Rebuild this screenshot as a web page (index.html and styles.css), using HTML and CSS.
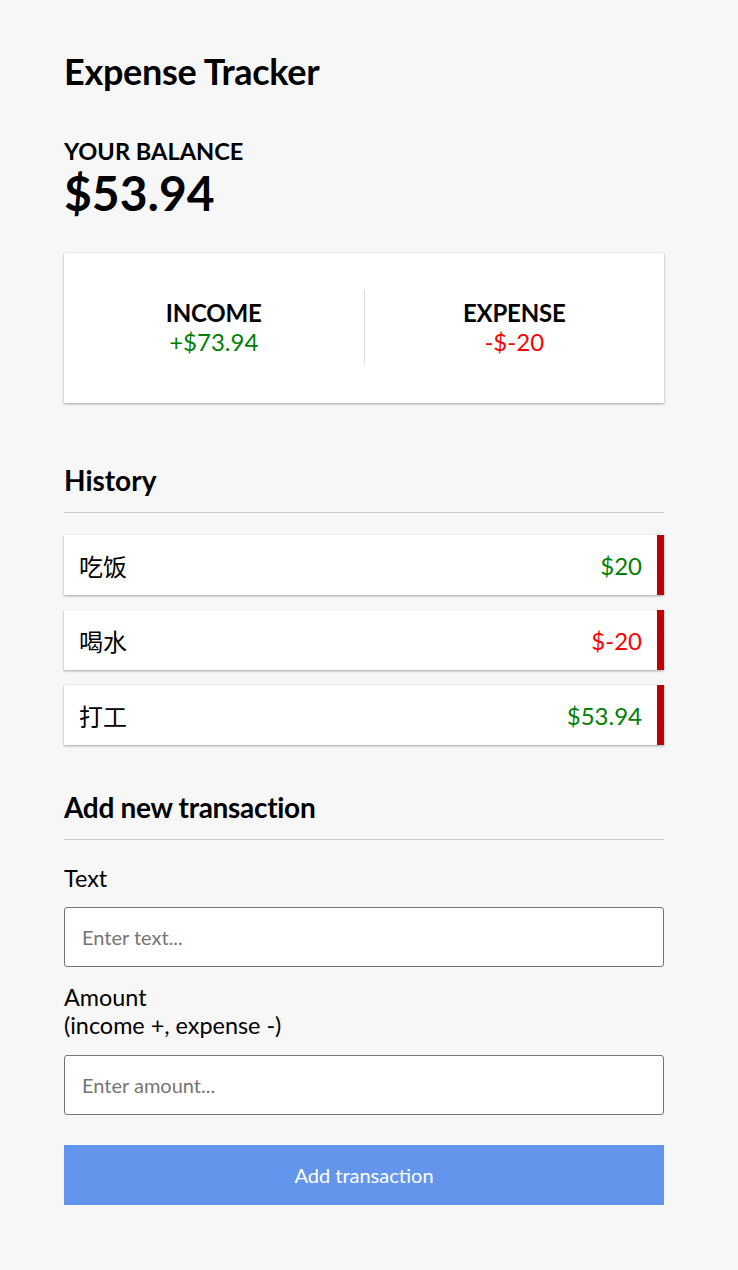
FILE: index.html
```html
<!DOCTYPE html>
<html lang="en">
<head>
<meta charset="UTF-8">
<title>Expense Tracker</title>
<link rel="stylesheet" href="styles.css">
</head>
<body>
<div class="container">
  <h1 class="title">Expense Tracker</h1>

  <h4 class="balance-label">Your Balance</h4>
  <p class="balance">$53.94</p>

  <div class="inc-exp">
    <div class="inc-exp-col first">
      <h4 class="inc-exp-label">Income</h4>
      <p class="money plus">+$73.94</p>
    </div>
    <div class="inc-exp-col">
      <h4 class="inc-exp-label">Expense</h4>
      <p class="money minus">-$-20</p>
    </div>
  </div>

  <h3 class="section-title history-title">History</h3>
  <ul class="list">
    <li class="item"><span class="item-text">吃饭</span><span class="item-amount plus">$20</span></li>
    <li class="item"><span class="item-text">喝水</span><span class="item-amount minus">$-20</span></li>
    <li class="item"><span class="item-text">打工</span><span class="item-amount plus">$53.94</span></li>
  </ul>

  <h3 class="section-title add-title">Add new transaction</h3>
  <form class="form">
    <label class="label" for="text">Text</label>
    <input class="field" type="text" id="text" placeholder="Enter text...">
    <label class="label" for="amount">Amount <br>(income +, expense -)</label>
    <input class="field" type="number" id="amount" placeholder="Enter amount...">
    <button class="btn" type="button">Add transaction</button>
  </form>
</div>
</body>
</html>
```

FILE: styles.css
```css
* {
  box-sizing: border-box;
}

body {
  margin: 0;
  background-color: #f7f7f7;
  font-family: Lato, "Noto Sans CJK SC", sans-serif;
  color: #000;
}

.container {
  width: 600px;
  margin: 0 0 0 64px;
  padding: 52px 0 65px;
}

.title {
  margin: 0;
  font-size: 36px;
  line-height: 38px;
  font-weight: 700;
  letter-spacing: -0.3px;
}

.balance-label {
  margin: 47px 0 0;
  font-size: 23.6px;
  line-height: 28px;
  font-weight: 700;
  text-transform: uppercase;
}

.balance {
  margin: 0;
  font-size: 48px;
  line-height: 56px;
  font-weight: 700;
}

.inc-exp {
  display: flex;
  margin-top: 32px;
  padding: 37px 0 38px;
  background-color: #fff;
  box-shadow: 0 1px 3px rgba(0, 0, 0, 0.12), 0 1px 2px rgba(0, 0, 0, 0.24);
}

.inc-exp-col {
  flex: 1;
  text-align: center;
  padding: 8px 0 8px;
}

.inc-exp-col.first {
  border-right: 1px solid #dedede;
}

.inc-exp-label {
  margin: 0;
  font-size: 24px;
  line-height: 29px;
  font-weight: 700;
  text-transform: uppercase;
  letter-spacing: -0.2px;
}

.money {
  margin: 0;
  font-size: 24px;
  line-height: 30px;
}

.money.plus,
.item-amount.plus {
  color: #008000;
}

.money.minus,
.item-amount.minus {
  color: #ff0000;
}

.section-title {
  margin: 0;
  font-size: 28px;
  line-height: 34px;
  font-weight: 700;
  letter-spacing: -0.3px;
  padding-bottom: 15px;
  border-bottom: 1px solid #cccccc;
}

.history-title {
  margin-top: 60px;
  letter-spacing: 0;
}

.list {
  list-style: none;
  margin: 22px 0 0;
  padding: 0;
  display: flex;
  flex-direction: column;
  gap: 15px;
}

.item {
  display: flex;
  justify-content: space-between;
  align-items: center;
  height: 60px;
  padding: 0 15px;
  background-color: #fff;
  border-right: 7px solid #c00000;
  box-shadow: 0 1px 3px rgba(0, 0, 0, 0.12), 0 1px 2px rgba(0, 0, 0, 0.24);
  font-size: 24px;
}

.item-text {
  font-family: "Noto Sans CJK SC", sans-serif;
  font-size: 24px;
  color: #000;
}

.add-title {
  margin-top: 45px;
}

.form {
  display: flex;
  flex-direction: column;
}

.label {
  margin: 24px 0 15px;
  font-size: 23.4px;
  line-height: 28px;
}

.field + .label {
  margin-top: 16px;
  margin-bottom: 16px;
}

.field {
  display: block;
  width: 100%;
  height: 60px;
  padding: 0 17px;
  border: 1px solid #767676;
  border-radius: 3px;
  background-color: #fff;
  font-family: Lato, sans-serif;
  font-size: 20px;
  color: #000;
  -moz-appearance: textfield;
}

.field::-webkit-outer-spin-button,
.field::-webkit-inner-spin-button {
  -webkit-appearance: none;
  margin: 0;
}

.field::placeholder {
  color: #757575;
}

.btn {
  display: block;
  width: 100%;
  height: 60px;
  margin-top: 30px;
  border: 0;
  background-color: #6495ed;
  color: #fff;
  font-family: Lato, sans-serif;
  font-size: 20px;
  cursor: pointer;
}
```
